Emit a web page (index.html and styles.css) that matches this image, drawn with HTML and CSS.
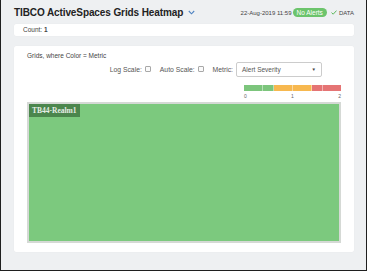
FILE: index.html
```html
<!DOCTYPE html>
<html lang="en">
<head>
    <meta charset="UTF-8">
    <title>TIBCO ActiveSpaces Grids Heatmap</title>
    <link rel="stylesheet" href="styles.css">
</head>
<body>
    <div class="frame">
        <div class="header">
            <div class="title">TIBCO ActiveSpaces Grids Heatmap</div>
            <svg class="chevron" width="7" height="5" viewBox="0 0 7 5"><path d="M0.8 1 L3.5 3.8 L6.2 1" fill="none" stroke="#4f83c2" stroke-width="1.1"/></svg>
            <div class="spacer"></div>
            <span class="stamp">22-Aug-2019 11:59</span>
            <span class="badge">No Alerts</span>
            <svg class="check" width="6" height="5" viewBox="0 0 6 5"><path d="M0.5 2.6 L2.2 4.2 L5.5 0.6" fill="none" stroke="#5cb85c" stroke-width="1"/></svg>
            <span class="data">DATA</span>
        </div>

        <div class="panel count">Count: <b>1</b></div>

        <div class="panel main">
            <div class="caption">Grids, where Color = Metric</div>
            <div class="controls">
                <label class="ctl">Log Scale: <span class="box"></span></label>
                <label class="ctl">Auto Scale: <span class="box"></span></label>
                <label class="ctl">Metric:</label>
                <div class="select">
                    <span>Alert Severity</span>
                    <span class="arrow">&#9660;</span>
                </div>
            </div>
            <div class="legend">
                <div class="bar">
                    <span class="seg g"></span><span class="seg g short"></span>
                    <span class="seg o"></span><span class="seg o"></span>
                    <span class="seg r short"></span><span class="seg r"></span>
                </div>
                <div class="ticks"><span>0</span><span>1</span><span>2</span></div>
            </div>
            <div class="heatmap">
                <div class="cell">
                    <span class="tag">TB44-Realm1</span>
                </div>
            </div>
        </div>
    </div>
</body>
</html>
```

FILE: styles.css
```css
*{
    box-sizing: border-box;
}
html,
body {
    height: 100%;
    margin: 0;
    padding: 0;
    font-family: 'Liberation Sans', Arial, sans-serif;
    color: #333;
    background-color: #eef0f2;
}
.frame {
    height: 271px;
    border: 1px solid #1f1f1f;
    border-top: none;
    padding: 0 12px 0 13px;
    display: flex;
    flex-direction: column;
}
.header {
    height: 24px;
    display: flex;
    align-items: center;
    padding-top: 1px;
}
.title {
    font-size: 10px;
    font-weight: bold;
    color: #222;
    letter-spacing: -0.1px;
}
.chevron {
    margin-left: 5px;
}
.spacer {
    flex: 1;
}
.stamp {
    font-size: 6px;
    color: #444;
}
.badge {
    margin-left: 1px;
    background-color: #6cc46c;
    color: #fff;
    font-size: 6.5px;
    line-height: 9px;
    padding: 0 4px;
    border-radius: 5px;
}
.check {
    margin-left: 4px;
}
.data {
    margin-left: 2px;
    font-size: 6px;
    color: #444;
}
.panel {
    background-color: #fff;
    border-radius: 2px;
    box-shadow: 0 0 1px rgba(0,0,0,0.08);
}
.count {
    height: 12px;
    font-size: 6.5px;
    line-height: 12px;
    padding-left: 9px;
    color: #444;
}
.main {
    margin-top: 10px;
    height: 206px;
    padding: 6px 13px 9px 13px;
    display: flex;
    flex-direction: column;
}
.caption {
    font-size: 6.5px;
    color: #444;
    padding-left: 0;
    height: 9px;
}
.controls {
    display: flex;
    align-items: center;
    justify-content: flex-end;
    padding-right: 19px;
    margin-top: 0;
    height: 16px;
}
.ctl {
    font-size: 6.8px;
    color: #555;
    display: flex;
    align-items: center;
    margin-left: 9px;
}
.box {
    display: inline-block;
    width: 6px;
    height: 6px;
    border: 1px solid #a8a8a8;
    border-radius: 1px;
    margin-left: 3px;
    background-color: #fafafa;
}
.select {
    margin-left: 3px;
    width: 86px;
    height: 15px;
    border: 1px solid #ccc;
    border-radius: 2px;
    display: flex;
    align-items: center;
    justify-content: space-between;
    padding: 0 5px 0 5px;
    font-size: 6.5px;
    color: #555;
}
.arrow {
    font-size: 4.5px;
    color: #444;
}
.legend {
    align-self: flex-end;
    width: 97px;
    margin-top: 8px;
}
.bar {
    display: flex;
    height: 6px;
}
.seg {
    flex: 1;
    border-right: 1px solid rgba(255,255,255,0.45);
}
.seg.short {
    flex: 0.5;
}
.seg:last-child {
    border-right: none;
}
.g {
    background-color: #7cc57c;
}
.o {
    background-color: #f7b84f;
}
.r {
    background-color: #e57474;
}
.ticks {
    display: flex;
    justify-content: space-between;
    font-size: 5px;
    color: #666;
    height: 11px;
    line-height: 11px;
}
.heatmap {
    flex: 1;
    border: 2px solid #d5d9d5;
    display: flex;
}
.cell {
    flex: 1;
    background-color: #7cc97e;
    position: relative;
}
.tag {
    position: absolute;
    left: 0;
    top: 0;
    background-color: #467f48;
    color: #f2f2f2;
    font-family: 'Liberation Serif', serif;
    font-weight: bold;
    font-size: 7.5px;
    padding: 2px 3px;
    opacity: 0.9;
}
```
